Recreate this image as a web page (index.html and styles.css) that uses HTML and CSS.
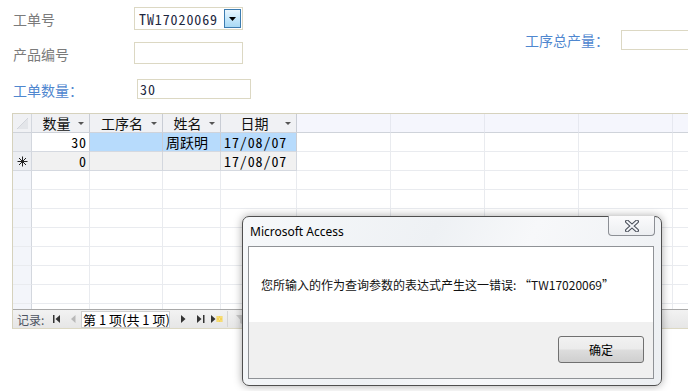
FILE: index.html
```html
<!DOCTYPE html>
<html lang="zh-CN">
<head>
  <meta charset="UTF-8" />
  <title>工单</title>
  <link rel="stylesheet" href="styles.css">
</head>
<body>
  <div class="form">
    <!-- header fields -->
    <div class="fields">
      <span class="label row1">工单号</span>
      <div class="combo">
        <span class="combo-text">TW17020069</span>
        <span class="combo-btn">
          <svg width="7" height="4" viewBox="0 0 7 4"><polygon points="0,0 7,0 3.5,4" fill="#000"/></svg>
        </span>
      </div>
      <div class="total">
        <span class="label blue">工序总产量：</span>
        <span class="box total-box"></span>
      </div>
      <span class="label row2">产品编号</span>
      <span class="box product-box"></span>
      <span class="label blue row3">工单数量：</span>
      <span class="box qty-box">30</span>
    </div>

    <!-- datasheet subform -->
    <div class="subform">
      <div class="sheet">
        <div class="row head">
          <div class="cell sel"><svg width="18" height="18" viewBox="0 0 18 18"><polygon points="4,15 15,4 15,15" fill="#e3e5e9"/><line x1="4" y1="15" x2="15" y2="4" stroke="#d2d5db"/></svg></div>
          <div class="cell hcell"><span>数量</span><i class="arrow"></i></div>
          <div class="cell hcell"><span>工序名</span><i class="arrow"></i></div>
          <div class="cell hcell"><span>姓名</span><i class="arrow"></i></div>
          <div class="cell hcell"><span>日期</span><i class="arrow"></i></div>
          <div class="cell hempty"></div>
          <div class="cell hempty"></div>
          <div class="cell hempty"></div>
          <div class="cell hempty"></div>
          <div class="cell hempty"></div>
        </div>
        <div class="row current">
          <div class="cell sel"></div>
          <div class="cell num first">30</div>
          <div class="cell picked"></div>
          <div class="cell picked text">周跃明</div>
          <div class="cell picked date">17/08/07</div>
          <div class="cell"></div>
          <div class="cell"></div>
          <div class="cell"></div>
          <div class="cell"></div>
          <div class="cell"></div>
        </div>
        <div class="row new">
          <div class="cell sel star">
            <svg width="11" height="11" viewBox="0 0 11 11"><path d="M5.5 0.5V10.5M0.5 5.5H10.5M2 2L9 9M9 2L2 9" stroke="#222" stroke-width="1"/></svg>
          </div>
          <div class="cell num">0</div>
          <div class="cell"></div>
          <div class="cell"></div>
          <div class="cell date">17/08/07</div>
          <div class="cell blank"></div>
          <div class="cell blank"></div>
          <div class="cell blank"></div>
          <div class="cell blank"></div>
          <div class="cell blank"></div>
        </div>
        <div class="row empty"><div class="cell sel"></div><div class="cell"></div><div class="cell"></div><div class="cell"></div><div class="cell"></div><div class="cell"></div><div class="cell"></div><div class="cell"></div><div class="cell"></div><div class="cell"></div></div>
        <div class="row empty"><div class="cell sel"></div><div class="cell"></div><div class="cell"></div><div class="cell"></div><div class="cell"></div><div class="cell"></div><div class="cell"></div><div class="cell"></div><div class="cell"></div><div class="cell"></div></div>
        <div class="row empty"><div class="cell sel"></div><div class="cell"></div><div class="cell"></div><div class="cell"></div><div class="cell"></div><div class="cell"></div><div class="cell"></div><div class="cell"></div><div class="cell"></div><div class="cell"></div></div>
        <div class="row empty"><div class="cell sel"></div><div class="cell"></div><div class="cell"></div><div class="cell"></div><div class="cell"></div><div class="cell"></div><div class="cell"></div><div class="cell"></div><div class="cell"></div><div class="cell"></div></div>
        <div class="row empty"><div class="cell sel"></div><div class="cell"></div><div class="cell"></div><div class="cell"></div><div class="cell"></div><div class="cell"></div><div class="cell"></div><div class="cell"></div><div class="cell"></div><div class="cell"></div></div>
        <div class="row empty"><div class="cell sel"></div><div class="cell"></div><div class="cell"></div><div class="cell"></div><div class="cell"></div><div class="cell"></div><div class="cell"></div><div class="cell"></div><div class="cell"></div><div class="cell"></div></div>
        <div class="row empty"><div class="cell sel"></div><div class="cell"></div><div class="cell"></div><div class="cell"></div><div class="cell"></div><div class="cell"></div><div class="cell"></div><div class="cell"></div><div class="cell"></div><div class="cell"></div></div>
        <div class="row empty"><div class="cell sel"></div><div class="cell"></div><div class="cell"></div><div class="cell"></div><div class="cell"></div><div class="cell"></div><div class="cell"></div><div class="cell"></div><div class="cell"></div><div class="cell"></div></div>
      </div>

      <!-- record navigation -->
      <div class="nav">
        <span class="nav-label">记录:</span>
        <svg class="nav-icon first-rec" width="8" height="8" viewBox="0 0 8 8"><rect x="0" y="0" width="1.5" height="8" fill="#333"/><polygon points="7,0 7,8 2.5,4" fill="#333"/></svg>
        <svg class="nav-icon prev-rec" width="5" height="8" viewBox="0 0 5 8"><polygon points="4.5,0 4.5,8 0,4" fill="#b9b9b9"/></svg>
        <span class="nav-box">第 1 项(共 1 项)</span>
        <svg class="nav-icon next-rec" width="5" height="8" viewBox="0 0 5 8"><polygon points="0,0 0,8 4.5,4" fill="#333"/></svg>
        <svg class="nav-icon last-rec" width="8" height="8" viewBox="0 0 8 8"><polygon points="0,0 0,8 4.5,4" fill="#333"/><rect x="6" y="0" width="1.5" height="8" fill="#333"/></svg>
        <svg class="nav-icon new-rec" width="13" height="8" viewBox="0 0 13 8"><polygon points="0,0 0,8 4.5,4" fill="#333"/><rect x="5.5" y="1" width="6" height="6" fill="#f4d35a"/><path d="M6.5 2h1M9.5 2h1M8 4h1M6.5 6h1M9.5 6h1" stroke="#fff6c4" stroke-width="1"/></svg>
        <span class="nav-sep"></span>
        <svg class="nav-icon filter" width="10" height="9" viewBox="0 0 10 9"><polygon points="0,0 10,0 6,4.5 6,9 4,8 4,4.5" fill="#c9c9c9"/></svg>
      </div>
    </div>
  </div>

  <!-- message box -->
  <div class="dialog">
    <div class="dialog-title">Microsoft Access</div>
    <div class="dialog-close">
      <svg width="14" height="12" viewBox="0 0 14 12">
        <path d="M2 1.5 L12 10.5 M12 1.5 L2 10.5" stroke="#4a4f5a" stroke-width="4" stroke-linecap="round"/>
        <path d="M2 1.5 L12 10.5 M12 1.5 L2 10.5" stroke="#f4f6fa" stroke-width="1.8" stroke-linecap="round"/>
      </svg>
    </div>
    <div class="dialog-panel">
      <div class="dialog-msg">您所输入的作为查询参数的表达式产生这一错误: “TW17020069”</div>
      <div class="dialog-foot">
        <button class="ok-btn">确定</button>
      </div>
    </div>
  </div>
</body>
</html>
```

FILE: styles.css
```css
body {
  margin: 0;
  width: 688px;
  height: 391px;
  overflow: hidden;
  position: relative;
  background: #fff;
  font-family: "Noto Sans CJK SC", "Noto Sans", sans-serif;
  color: #000;
}

/* ---------- top fields ---------- */
.fields {
  display: grid;
  grid-template-columns: 121px 391px 1fr;
  grid-template-rows: 35px 37px 34px;
  padding: 7px 0 0 13px;
  height: 106px;
}

.label {
  font-size: 14px;
  color: #7b7b7b;
  white-space: nowrap;
}

.label.blue {
  color: #4f87cf;
}

.row1 {
  line-height: 25px;
}

.row2 {
  line-height: 22px;
  margin-top: 1px;
}

.row3 {
  line-height: 20px;
  margin-top: 1px;
}

.box {
  display: block;
  box-sizing: border-box;
  border: 1px solid #dcd8c3;
  background: #fff;
}

.combo {
  box-sizing: border-box;
  width: 109px;
  height: 23px;
  border: 1px solid #dcd8c3;
  display: flex;
  align-items: center;
  justify-content: space-between;
}

.combo-text,
.qty-box,
.num,
.date {
  font-family: "Noto Sans Mono CJK SC", "Liberation Mono", monospace;
  font-size: 14px;
  letter-spacing: 0.9px;
}

.combo-text {
  color: #1d2740;
  padding-left: 4px;
}

.combo-btn {
  box-sizing: border-box;
  width: 17px;
  height: 19px;
  margin-right: 1px;
  border: 1px solid #3c7cb0;
  background: linear-gradient(#eaf6fd, #c7e8fb 50%, #a9d9f4);
  display: flex;
  align-items: center;
  justify-content: center;
}

.total {
  grid-column: 3;
  grid-row: 1 / span 2;
  align-self: start;
  margin-top: 23px;
  display: flex;
  align-items: center;
}

.total .label {
  width: 96px;
  line-height: 20px;
}

.total-box {
  width: 80px;
  height: 20px;
}

.product-box {
  width: 109px;
  height: 22px;
}

.qty-box {
  width: 114px;
  height: 20px;
  margin-left: 3px;
  line-height: 18px;
  padding-left: 2px;
  color: #1d2740;
}

/* ---------- datasheet ---------- */
.subform {
  margin-left: 12px;
  border-left: 1px solid #d6d2bd;
  border-top: 1px solid #d6d2bd;
  border-bottom: 1px solid #dcd8c3;
}

.sheet {
  height: 195px;
  overflow: hidden;
}

.row {
  display: grid;
  grid-template-columns: 19px 58px 73px 58px 76px repeat(5, 94px);
  height: 19px;
}

.cell {
  box-sizing: border-box;
  border-right: 1px solid #e9ebef;
  border-bottom: 1px solid #e9ebef;
  font-size: 14px;
  line-height: 18px;
  white-space: nowrap;
  overflow: hidden;
}

.sel {
  background: #f3f5fa;
  border-right-color: #d3d7de;
}

.head .cell {
  border-bottom-color: #cfd3da;
}

.head .sel {
  background: #f0f1f4;
}

.hcell {
  background: #f0f1f4;
  border-right-color: #c9cdd5;
  display: flex;
  align-items: center;
  justify-content: center;
  position: relative;
  color: #111;
}

.hcell span {
  margin-right: 8px;
}

.arrow {
  position: absolute;
  right: 5px;
  top: 8px;
  width: 0;
  height: 0;
  border-left: 3px solid transparent;
  border-right: 3px solid transparent;
  border-top: 3px solid #555;
}

.hempty {
  background: #f5f6fd;
  border-right-color: #e6e8f0;
}

.current .cell,
.new .cell {
  border-bottom-color: #d5d9e0;
}

.current .sel {
  background: #eceef2;
}

.first {
  background: #fff;
  border-right-color: #c9cdd5;
}

.picked {
  background: #b7dbfc;
  border-right-color: #c9cdd5;
}

.new .cell {
  background: #f1f1f1;
  border-right-color: #d3d7de;
}

.new .sel {
  background: #eceef2;
}

.new .blank,
.current .cell:nth-child(n+6) {
  background: #fff;
  border-right-color: #e9ebef;
  border-bottom-color: #e9ebef;
}

.star {
  display: flex;
  align-items: center;
  justify-content: center;
}

.num {
  text-align: right;
  padding-right: 2px;
}

.text {
  padding-left: 3px;
}

.date {
  padding-left: 3px;
}

/* ---------- navigation bar ---------- */
.nav {
  height: 18px;
  border-top: 1px solid #a8a8a8;
  background: linear-gradient(#f2f2f2, #e6e6e6);
  display: flex;
  align-items: center;
  font-size: 12px;
}

.nav-label {
  color: #4c5260;
  padding-left: 4px;
  width: 36px;
}

.nav-icon {
  flex: none;
}

.prev-rec {
  margin-left: 10px;
}

.nav-box {
  margin-left: 5px;
  width: 89px;
  height: 17px;
  box-sizing: border-box;
  border: 1px solid #d0d0d0;
  background: #fff;
  font-size: 13px;
  line-height: 15px;
  color: #000;
  white-space: nowrap;
  padding-left: 1px;
}

.next-rec {
  margin-left: 11px;
}

.last-rec {
  margin-left: 11px;
}

.new-rec {
  margin-left: 6px;
}

.nav-sep {
  width: 1px;
  height: 16px;
  background: #d4d4d4;
  margin-left: 3px;
}

.filter {
  margin-left: 8px;
}

/* ---------- message box ---------- */
.dialog {
  position: absolute;
  left: 242px;
  top: 216px;
  width: 420px;
  height: 170px;
  box-sizing: border-box;
  border: 1px solid #4f4f4f;
  border-radius: 7px;
  background: linear-gradient(115deg, #f6f8fa 0%, #eef1f4 40%, #f7f8fa 60%, #eceff2 100%);
  box-shadow: 0 0 9px rgba(0, 0, 0, 0.35);
  display: flex;
  flex-direction: column;
}

.dialog-title {
  height: 29px;
  padding-left: 7px;
  font-family: "Noto Sans", sans-serif;
  font-size: 12px;
  line-height: 29px;
  color: #000;
}

.dialog-close {
  position: absolute;
  right: 6px;
  top: -1px;
  width: 47px;
  height: 20px;
  box-sizing: border-box;
  border: 1px solid #8c8f95;
  border-top: none;
  border-radius: 0 0 4px 4px;
  background: linear-gradient(#fbfbfc, #eceef1);
  display: flex;
  align-items: center;
  justify-content: center;
}

.dialog-panel {
  flex: 1;
  margin: 0 7px 6px 5px;
  border: 1px solid #8f9296;
  display: flex;
  flex-direction: column;
}

.dialog-msg {
  height: 75px;
  background: #fff;
  padding-left: 12px;
  font-size: 12px;
  line-height: 75px;
  color: #111;
  white-space: nowrap;
}

.dialog-foot {
  flex: 1;
  background: #f0f0f0;
  display: flex;
  justify-content: flex-end;
  align-items: flex-start;
  padding: 14px 9px 0 0;
}

.ok-btn {
  width: 86px;
  height: 27px;
  border: 1px solid #707070;
  border-radius: 3px;
  background: linear-gradient(#f2f2f2 0%, #ebebeb 48%, #dddddd 52%, #cfcfcf 100%);
  font-family: "Noto Sans CJK SC", sans-serif;
  font-size: 12px;
  color: #000;
  padding: 0;
}
```
